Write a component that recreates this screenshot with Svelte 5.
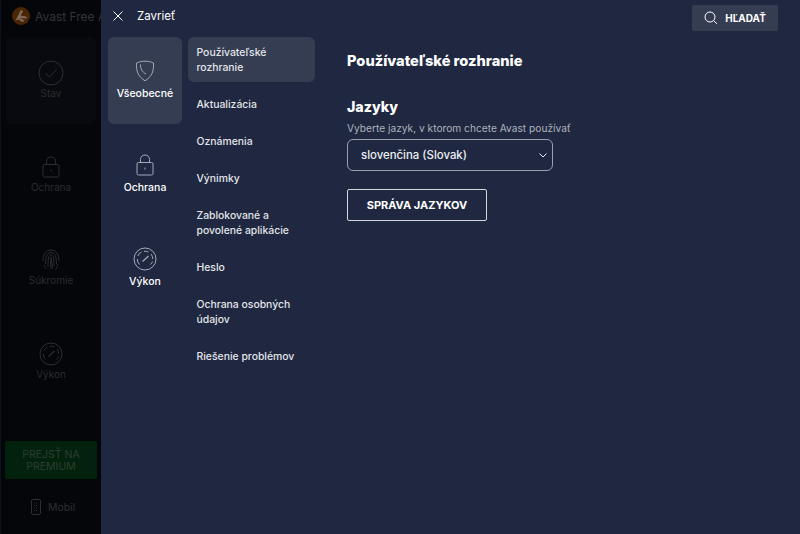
<script>
  const dimItems = [
    { label: "Stav", icon: "check", active: true },
    { label: "Ochrana", icon: "lock" },
    { label: "Súkromie", icon: "print" },
    { label: "Výkon", icon: "gauge" },
  ];

  const categories = [
    { label: "Všeobecné", icon: "shield", active: true },
    { label: "Ochrana", icon: "lock" },
    { label: "Výkon", icon: "gauge" },
  ];

  const pages = [
    { label: ["Používateľské", "rozhranie"], active: true },
    { label: ["Aktualizácia"] },
    { label: ["Oznámenia"] },
    { label: ["Výnimky"] },
    { label: ["Zablokované a", "povolené aplikácie"] },
    { label: ["Heslo"] },
    { label: ["Ochrana osobných", "údajov"] },
    { label: ["Riešenie problémov"] },
  ];
</script>

{#snippet icon(name)}
  {#if name === "check"}
    <svg viewBox="0 0 26 26" width="26" height="26">
      <circle cx="13" cy="13" r="12" />
      <path d="M7.500 13.500l4 3.500 7-7.500" />
    </svg>
  {:else if name === "shield"}
    <svg viewBox="0 0 20 22" width="20" height="22">
      <path d="M1.500 3C4.500 1.600 7 1.200 10 1.200S15.500 1.600 18.500 3C19 11 17 16.500 10 20.800C3 16.500 1 11 1.500 3Z" />
      <path d="M5.500 4.500C5.300 8.500 7 12 11 14" />
    </svg>
  {:else if name === "lock"}
    <svg viewBox="0 0 18 22" width="18" height="22">
      <rect x="1" y="8.500" width="16" height="12.500" rx="1.500" />
      <path d="M4.500 8.500V5.500C4.500 2.800 6.300 1 9 1S13.500 2.800 13.500 5.500V8.500" />
      <path d="M9 13.500V15.500" />
    </svg>
  {:else if name === "gauge"}
    <svg viewBox="0 0 24 24" width="24" height="24">
      <circle cx="12" cy="12" r="11" />
      <path d="M6.500 17.500A7.800 7.800 0 0 1 4.300 12M4.800 9A7.800 7.800 0 0 1 8.500 5M11 4.300A7.800 7.800 0 0 1 15.500 5M18 7A7.800 7.800 0 0 1 19.800 12M19.500 14.500A7.800 7.800 0 0 1 17.500 17.500" />
      <path d="M9.500 14.500L15.500 9" stroke-width="1.300" />
    </svg>
  {:else if name === "print"}
    <svg viewBox="0 0 18 22" width="18" height="22">
      <path d="M1 12C1 5 4 1 9 1S17 5 17 12" />
      <path d="M3.500 15C3.500 8 5 3.500 9 3.500S14.500 8 14.500 15" />
      <path d="M6 18C6 10 6.500 6 9 6S12 10 12 17" />
      <path d="M9 20C8.500 14 8.500 11 9 8.500C9.800 12 10 16 10.500 19.500" />
      <path d="M2 16C2.500 18 3.500 19 4.500 20" />
      <path d="M15.800 15C15.500 17 15 18.500 13.500 20.500" />
    </svg>
  {/if}
{/snippet}

<div class="app">
  <aside class="side">
    <div class="brand">
      <svg class="logo" viewBox="0 0 18 18" width="18" height="18">
        <circle cx="9" cy="9" r="9" fill="#4a2506" />
        <path d="M3.500 13.500L8.500 3.500C9.500 3 10.500 3.500 11 4.500L8.500 8.500L14 9.500C14.800 10 15 11 14.500 11.500L8 11L12.500 13.500C12 14.500 11 15 10 14.800L6.500 12.500Z" fill="#7d6a5a" />
      </svg>
      <span>Avast Free A</span>
    </div>
    <nav class="dim-list">
      {#each dimItems as item}
        <div class="dim-item">
          <div class="ico">{@render icon(item.icon)}</div>
          <span>{item.label}</span>
        </div>
      {/each}
    </nav>
    <div class="premium">PREJSŤ NA<br />PREMIUM</div>
    <div class="mobile">
      <svg viewBox="0 0 10 16" width="10" height="16">
        <rect x="0.500" y="0.500" width="9" height="15" rx="1.500" />
        <path d="M3 4H7M3 6.500H7M3 9H7M3 11.500H7" stroke-dasharray="1 1" />
      </svg>
      <span>Mobil</span>
    </div>
  </aside>

  <section class="panel">
    <header class="top">
      <button class="close">
        <svg viewBox="0 0 10 10" width="10" height="10">
          <path d="M0.500 0.500L9.500 9.500M9.500 0.500L0.500 9.500" />
        </svg>
        <span>Zavrieť</span>
      </button>
      <button class="search">
        <svg viewBox="0 0 14 14" width="14" height="14">
          <circle cx="6" cy="6" r="5" />
          <path d="M9.800 9.800L13 12.800" />
        </svg>
        <span>HĽADAŤ</span>
      </button>
    </header>

    <div class="body">
      <nav class="cats">
        {#each categories as cat}
          <div class="cat" class:active={cat.active}>
            <div class="ico">{@render icon(cat.icon)}</div>
            <span>{cat.label}</span>
          </div>
        {/each}
      </nav>

      <nav class="pages">
        {#each pages as page}
          <div class="page" class:active={page.active}>
            {#each page.label as line}
              <span>{line}</span>
            {/each}
          </div>
        {/each}
      </nav>

      <main class="content">
        <h1>Používateľské rozhranie</h1>
        <h2>Jazyky</h2>
        <p>Vyberte jazyk, v ktorom chcete Avast používať</p>
        <div class="select">
          <span>slovenčina (Slovak)</span>
          <svg viewBox="0 0 8 5" width="8" height="5">
            <path d="M0.500 0.500L4 4L7.500 0.500" />
          </svg>
        </div>
        <button class="manage">SPRÁVA JAZYKOV</button>
      </main>
    </div>
  </section>
</div>

<style>
  :global(body) {
    margin: 0;
    background: #05060a;
  }
  .app {
    display: flex;
    width: 800px;
    height: 534px;
    overflow: hidden;
    font-family: "Inter", "Liberation Sans", sans-serif;
    font-size: 11px;
  }
  svg {
    fill: none;
    stroke: currentColor;
    stroke-width: 1;
    flex: none;
  }
  button {
    font: inherit;
    border: none;
    background: none;
    padding: 0;
  }
  .ico {
    height: 26px;
    display: flex;
    align-items: center;
    justify-content: center;
  }

  /* dimmed window behind the settings panel */
  .side {
    width: 101px;
    flex: none;
    border-left: 1px solid #0c1120;
    box-sizing: border-box;
    display: flex;
    flex-direction: column;
    color: #343539;
    position: relative;
    overflow: hidden;
  }
  .brand {
    height: 32px;
    display: flex;
    align-items: center;
    gap: 5px;
    padding-left: 11px;
    white-space: nowrap;
    font-size: 12px;
    color: #33343a;
  }
  .logo {
    stroke: none;
  }
  .dim-list {
    display: flex;
    flex-direction: column;
    padding: 5px 5px 0;
  }
  .dim-item {
    height: 93.500px;
    display: flex;
    flex-direction: column;
    align-items: center;
    padding-top: 23px;
    gap: 1px;
    box-sizing: border-box;
    line-height: 13px;
    font-size: 10px;
    color: #2b2c31;
  }
  .dim-item .ico {
    color: #2d2e33;
  }
  .dim-item:first-child {
    height: 87px;
    margin-bottom: 6.500px;
    border-radius: 6px;
    background: #090a0f;
  }
  .premium {
    position: absolute;
    left: 4px;
    top: 441px;
    width: 92px;
    height: 38px;
    border-radius: 2px;
    background: #03220d;
    color: #2b3f2f;
    font-size: 10.500px;
    line-height: 12px;
    text-align: center;
    display: flex;
    align-items: center;
    justify-content: center;
    padding-top: 1px;
    box-sizing: border-box;
  }
  .mobile {
    position: absolute;
    left: 30px;
    top: 499px;
    display: flex;
    align-items: center;
    gap: 7px;
    font-size: 10.500px;
    color: #2e2f34;
  }

  .panel {
    flex: 1;
    background: #1f2840;
    color: #fff;
    display: flex;
    flex-direction: column;
    min-width: 0;
  }
  .top {
    height: 37px;
    flex: none;
    display: flex;
    align-items: flex-start;
    justify-content: space-between;
    padding-right: 22px;
  }
  .close {
    display: flex;
    align-items: center;
    gap: 14px;
    height: 32px;
    margin-left: 12px;
    color: #fff;
    font-size: 11.500px;
  }
  .search {
    display: flex;
    align-items: center;
    justify-content: center;
    gap: 7px;
    width: 86px;
    height: 26px;
    margin-top: 5px;
    border-radius: 2px;
    background: #353d52;
    color: #fff;
    font-size: 10px;
    font-weight: 700;
  }

  .body {
    flex: 1;
    display: flex;
    min-height: 0;
  }
  .cats {
    width: 74px;
    margin-left: 7px;
    flex: none;
    display: flex;
    flex-direction: column;
  }
  .cat {
    height: 87px;
    margin-bottom: 7px;
    border-radius: 6px;
    display: flex;
    flex-direction: column;
    align-items: center;
    padding-top: 21px;
    box-sizing: border-box;
    gap: 3px;
    line-height: 13px;
    font-size: 10.500px;
    font-weight: 500;
    color: #fff;
  }
  .cat .ico {
    color: #a3a8b4;
  }
  .cat.active {
    background: #353d52;
  }
  .pages {
    width: 127px;
    margin-left: 6px;
    flex: none;
    display: flex;
    flex-direction: column;
    gap: 7px;
  }
  .page {
    box-sizing: border-box;
    padding: 7.500px 8.500px;
    border-radius: 6px;
    display: flex;
    flex-direction: column;
    justify-content: center;
    line-height: 15px;
    font-size: 10.400px;
    font-weight: 500;
    color: #e3e5ea;
  }
  .page.active {
    background: #353d52;
  }
  .content {
    margin-left: 32px;
    display: flex;
    flex-direction: column;
    align-items: flex-start;
  }
  h1 {
    margin: 15px 0 0;
    font-size: 14.600px;
    line-height: 18px;
    font-weight: 800;
  }
  h2 {
    margin: 28px 0 0;
    font-size: 14.200px;
    line-height: 18px;
    font-weight: 800;
  }
  p {
    margin: 5px 0 0;
    font-size: 10.200px;
    line-height: 14px;
    color: #aeb2bd;
  }
  .select {
    margin-top: 4px;
    width: 206px;
    height: 32px;
    box-sizing: border-box;
    border: 1px solid #9a9fad;
    border-radius: 6px;
    padding: 0 5px 0 13px;
    display: flex;
    align-items: center;
    justify-content: space-between;
    font-size: 11.400px;
    font-weight: 500;
    color: #eceef2;
  }
  .manage {
    margin-top: 18px;
    width: 140px;
    height: 32px;
    box-sizing: border-box;
    border: 1px solid #d5d7dd;
    border-radius: 2px;
    color: #fff;
    font-size: 11px;
    font-weight: 700;
  }
</style>
